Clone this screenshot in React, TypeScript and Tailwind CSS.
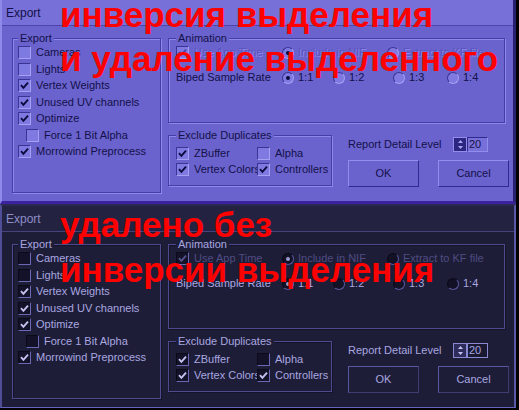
import clsx from "clsx";

type Theme = {
  root: string;
  title: string;
  text: string;
  dim: string;
  group: string;
  legend: string;
  box: string;
  mark: string;
  markDim: string;
  radio: string;
  dot: string;
  btn: string;
  spin: string;
  arrow: string;
  edit: string;
};

const light: Theme = {
  root: "bg-[#6a63cd] border-l-2 border-l-[#8f89ea] border-r-[3px] border-r-[#2a2070] border-b-[3px] border-b-[#3a22a0]",
  title: "bg-[#7770d8] text-[#14104a] border-b border-b-[#4c45ac]",
  text: "text-[#14104a]",
  dim: "text-[#5a53bd] [text-shadow:1px_1px_0_#8e88ea]",
  group: "border-[#453ea6] shadow-[1px_1px_0_#8e88ea,inset_1px_1px_0_#8e88ea]",
  legend: "bg-[#6a63cd] text-[#14104a]",
  box: "bg-[#7f79e2] border-t-[#3a3494] border-l-[#3a3494] border-b-[#a5a0f2] border-r-[#a5a0f2]",
  mark: "#0c0a3c",
  markDim: "#4a44aa",
  radio: "bg-[#7f79e2] border-t-[#3a3494] border-l-[#3a3494] border-b-[#a5a0f2] border-r-[#a5a0f2]",
  dot: "bg-[#0c0a3c]",
  btn: "text-[#14104a] border-t-[#938dee] border-l-[#938dee] border-b-[#2f2990] border-r-[#2f2990]",
  spin: "bg-[#2c2680] border-[#938dee]",
  arrow: "#a8a4f4",
  edit: "bg-[#7770d8] text-[#14104a] border-t-[#2f2990] border-l-[#2f2990] border-b-[#938dee] border-r-[#938dee]",
};

const dark: Theme = {
  root: "bg-[#1e1d37] border-l-2 border-l-[#4f4d96] border-r-2 border-r-[#5a58a8] border-t-2 border-t-[#2c2a50] border-b border-b-[#6764c0]",
  title: "bg-[#232241] text-[#8f8dc8] border-b border-b-[#45437e]",
  text: "text-[#a9a7e0]",
  dim: "text-[#4e4c82]",
  group: "border-[#4d4b8e] shadow-[1px_1px_0_#14132a,inset_1px_1px_0_#14132a]",
  legend: "bg-[#1e1d37] text-[#a9a7e0]",
  box: "bg-[#131228] border-t-[#0a0a18] border-l-[#0a0a18] border-b-[#6a68b4] border-r-[#6a68b4]",
  mark: "#c4c2f0",
  markDim: "#55538a",
  radio: "bg-[#121126] border-t-[#0a0a18] border-l-[#0a0a18] border-b-[#5a58a0] border-r-[#5a58a0]",
  dot: "bg-[#9c9ad0]",
  btn: "text-[#a9a7e0] border-t-[#5a58a0] border-l-[#5a58a0] border-b-[#3e3c72] border-r-[#3e3c72]",
  spin: "bg-[#2e2c5a] border-[#8a88d0]",
  arrow: "#c4c2f0",
  edit: "bg-[#1a1932] text-[#a9a7e0] border-[#8a88d0]",
};

function Check({ t, on, dim, label, className }: { t: Theme; on?: boolean; dim?: boolean; label: string; className?: string }) {
  return (
    <div className={clsx("flex h-[16.5px] items-center gap-[5px]", className)}>
      <span className={clsx("flex h-[13px] w-[13px] shrink-0 items-center justify-center border", t.box)}>
        {on && (
          <svg width="9" height="9" viewBox="0 0 9 9">
            <path d="M1 4.2L3.4 6.8L8 1.6" stroke={dim ? t.markDim : t.mark} strokeWidth="1.9" fill="none" />
          </svg>
        )}
      </span>
      <span className={clsx("whitespace-nowrap", dim ? t.dim : t.text)}>{label}</span>
    </div>
  );
}

function Radio({ t, on, dim, label, className }: { t: Theme; on?: boolean; dim?: boolean; label: string; className?: string }) {
  return (
    <div className={clsx("flex items-center gap-[4px]", className)}>
      <span className={clsx("flex h-[12px] w-[12px] shrink-0 items-center justify-center rounded-full border", t.radio)}>
        {on && <span className={clsx("h-[4px] w-[4px] rounded-full", t.dot)} />}
      </span>
      <span className={clsx("whitespace-nowrap", dim ? t.dim : t.text)}>{label}</span>
    </div>
  );
}

function Group({ t, label, className, children }: { t: Theme; label: string; className: string; children: React.ReactNode }) {
  return (
    <fieldset className={clsx("border", t.group, className)}>
      <legend className={clsx("px-[2px] leading-[13px]", t.legend)}>{label}</legend>
      {children}
    </fieldset>
  );
}

function Dialog({ t }: { t: Theme }) {
  return (
    <div className={clsx("flex h-[204px] w-[516px] shrink-0 flex-col overflow-hidden", t.root)}>
      <div className={clsx("flex h-[26px] shrink-0 items-center pl-[4px] text-[12px]", t.title)}>Export</div>
      <div className="flex gap-[7px] pl-[10px] pt-[5.5px]">
        <Group t={t} label="Export" className="h-[161px] w-[149px] pl-[5px]">
          <Check t={t} label="Cameras" />
          <Check t={t} label="Lights" />
          <Check t={t} on label="Vertex Weights" />
          <Check t={t} on label="Unused UV channels" />
          <Check t={t} on label="Optimize" />
          <Check t={t} label="Force 1 Bit Alpha" className="pl-[8px]" />
          <Check t={t} on label="Morrowind Preprocess" />
        </Group>
        <div className="flex flex-col">
          <Group t={t} label="Animation" className="h-[91px] w-[337px] pl-[7px]">
            <div className="flex h-[16.5px] items-center">
              <Check t={t} on dim label="Use App Time" className="w-[106px]" />
              <Radio t={t} on dim label="Include in NIF" className="w-[105px]" />
              <Radio t={t} dim label="Extract to KF file" />
            </div>
            <div className="mt-[8.5px] flex h-[16.5px] items-center">
              <span className={clsx("w-[106px]", t.text)}>Biped Sample Rate</span>
              <Radio t={t} on label="1:1" className="w-[51px]" />
              <Radio t={t} label="1:2" className="w-[60px]" />
              <Radio t={t} label="1:3" className="w-[54px]" />
              <Radio t={t} label="1:4" />
            </div>
          </Group>
          <div className="mt-[6px] flex">
            <Group t={t} label="Exclude Duplicates" className="h-[57px] w-[164px] pl-[7px]">
              <div className="mt-[3.5px] grid grid-cols-[81px_1fr]">
                <Check t={t} on label="ZBuffer" className="h-[16px]" />
                <Check t={t} label="Alpha" className="h-[16px]" />
                <Check t={t} on label="Vertex Colors" className="h-[16px]" />
                <Check t={t} on label="Controllers" className="h-[16px]" />
              </div>
            </Group>
            <div className="ml-[16px] flex flex-col pt-[8.5px]">
              <div className="flex h-[15px] items-center">
                <span className={clsx("w-[105px]", t.text)}>Report Detail Level</span>
                <div className={clsx("flex h-[15px] w-[14px] flex-col border", t.spin)}>
                  <div className="flex flex-1 items-center justify-center">
                    <svg width="5" height="3" viewBox="0 0 5 3"><path d="M0 3L2.5 0L5 3Z" fill={t.arrow} /></svg>
                  </div>
                  <div className="flex flex-1 items-center justify-center">
                    <svg width="5" height="3" viewBox="0 0 5 3"><path d="M0 0L2.5 3L5 0Z" fill={t.arrow} /></svg>
                  </div>
                </div>
                <div className={clsx("flex h-[15px] w-[21px] items-center border pl-[1px]", t.edit)}>20</div>
              </div>
              <div className="mt-[8px] flex gap-[19px]">
                <div className={clsx("flex h-[27px] w-[71px] items-center justify-center border", t.btn)}>OK</div>
                <div className={clsx("flex h-[27px] w-[71px] items-center justify-center border", t.btn)}>Cancel</div>
              </div>
            </div>
          </div>
        </div>
      </div>
    </div>
  );
}

export default function App() {
  return (
    <div className="relative h-[410px] w-[519px] overflow-hidden bg-black font-['Liberation_Sans',Arial,sans-serif] text-[11px] leading-none">
      <div className="flex flex-col">
        <Dialog t={light} />
        <Dialog t={dark} />
      </div>
      <div className="absolute left-[60px] top-[-7px] whitespace-nowrap text-[35px] font-bold leading-[43.5px] text-[#ff0000]">
        <div>инверсия выделения</div>
        <div>и удаление выделенного</div>
      </div>
      <div className="absolute left-[60px] top-[203px] whitespace-nowrap text-[35px] font-bold leading-[44.5px] text-[#ff0000]">
        <div>удалено без</div>
        <div>инверсии выделения</div>
      </div>
    </div>
  );
}
